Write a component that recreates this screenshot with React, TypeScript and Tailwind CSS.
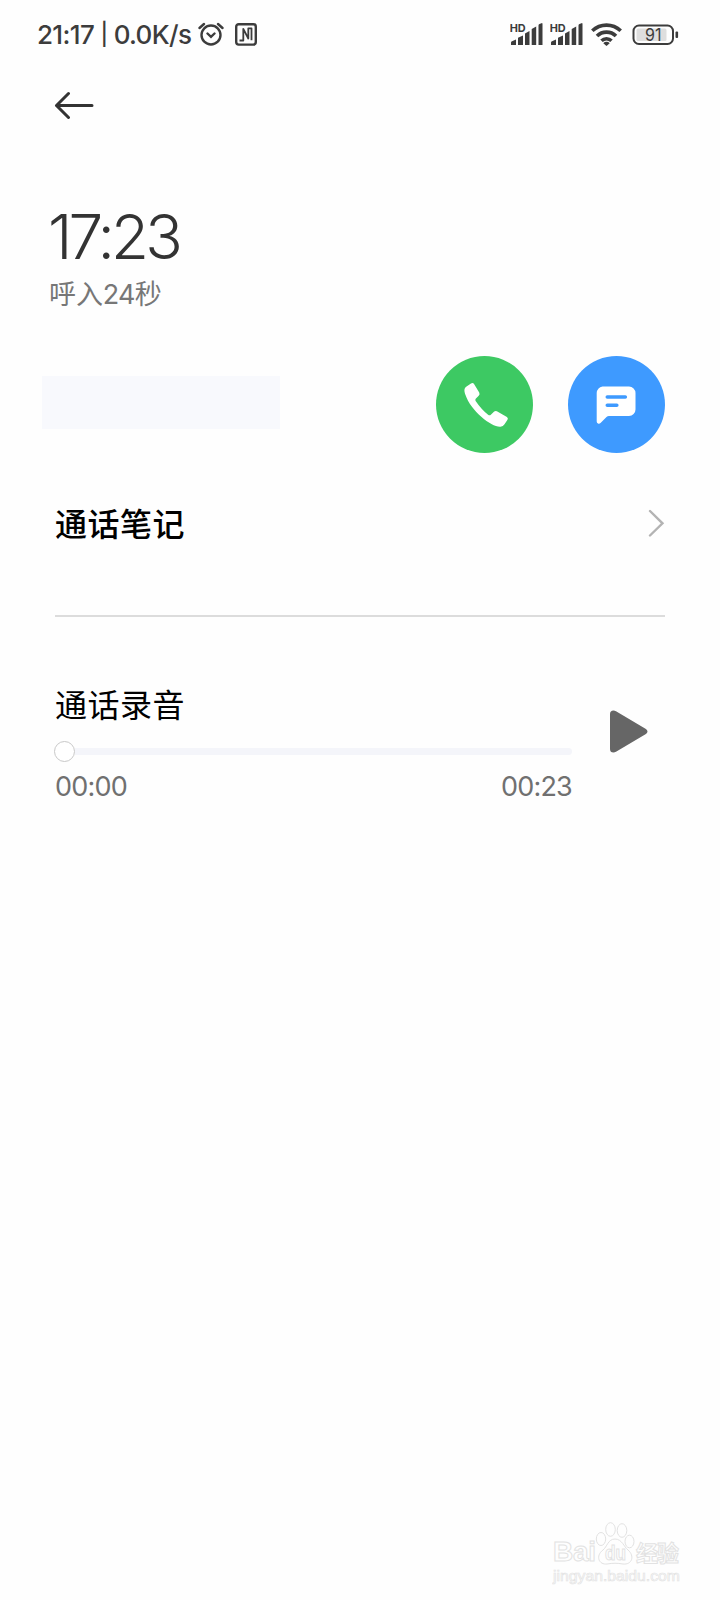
import type { ReactNode } from "react"

const SANS = "font-['Inter','Noto_Sans_CJK_SC',sans-serif]"

function SignalIcon() {
  return (
    <svg width="40" height="24" viewBox="0 0 40 24" fill="#3c3c3c">
      <path d="M1 23v-2.500q0-1 1-1.300l4-1.700V23zM8 23v-7.200l5-2.300V23zM15 23V11.500l4.500-2.500v14zM21.700 23V7l4.500-2.500V23zM28.500 23V3.500q0-1 1-1.400l2-.9q1-.4 1 .8v21z" />
      <text
        x="-0.300"
        y="9.500"
        fontSize="11"
        fontWeight="700"
        textLength="16"
        lengthAdjust="spacingAndGlyphs"
      >
        HD
      </text>
    </svg>
  )
}

function StatusBar() {
  return (
    <header className="flex h-[70px] items-start justify-between pt-[22px] pr-[41px] pl-[37px] text-[#3c3c3c]">
      <div className="flex h-6 items-center">
        <span className="w-[161px] pt-[2px] text-[26px] leading-6 font-medium tracking-[-0.65px] whitespace-nowrap">
          21:17 <span className="relative -top-[2px] text-[22px]">|</span> 0.0K/s
        </span>
        <svg width="26" height="24" viewBox="0 0 26 24" fill="none" stroke="#3c3c3c" strokeWidth="2.400" strokeLinecap="round">
          <circle cx="13" cy="13" r="9.500" />
          <path d="M1.500 6 6 2M24.500 6 20 2M9.500 11.500l3.500 3.300 3.500-3.300" />
        </svg>
        <svg className="ml-[11px]" width="22" height="24" viewBox="0 0 22 24" fill="none" stroke="#3c3c3c" strokeWidth="2.400" strokeLinejoin="round">
          <rect x="1.200" y="2.200" width="19.600" height="20.400" rx="2.500" />
          <path d="M4.500 18.500h3.800V6.800l5 9.700V6.300h3.200v12" strokeWidth="1.800" />
        </svg>
      </div>
      <div className="flex h-6">
        <SignalIcon />
        <SignalIcon />
        <svg className="ml-[1px]" width="31" height="24" viewBox="0 0 31 24" fill="none" stroke="#3c3c3c" strokeWidth="3.600">
          <path d="M1.300 8.800a20.500 20.500 0 0 1 28.400 0" />
          <path d="M6 14a13.500 13.500 0 0 1 19 0" />
          <path d="M10.500 18.700a7.200 7.200 0 0 1 10 0" />
          <path d="M12.300 21.300a4.300 4.300 0 0 1 6.400 0L15.500 24z" fill="#3c3c3c" stroke="none" />
        </svg>
        <svg className="ml-[10px]" width="47" height="24" viewBox="0 0 47 24">
          <rect x="1.500" y="3.500" width="39.500" height="18.500" rx="5.500" fill="none" stroke="#3c3c3c" strokeWidth="2" />
          <rect x="4.500" y="6.500" width="30" height="12.500" rx="1.500" fill="#dedede" />
          <rect x="43.500" y="9.500" width="2.600" height="6.500" rx="1" fill="#3c3c3c" />
          <text x="13" y="19" fontSize="17" fill="#3c3c3c" textLength="16.500" lengthAdjust="spacingAndGlyphs">
            91
          </text>
        </svg>
      </div>
    </header>
  )
}

function RoundButton({ className, label, children }: { className: string; label: string; children: ReactNode }) {
  return (
    <button aria-label={label} className={`flex size-[97px] items-center justify-center rounded-full ${className}`}>
      {children}
    </button>
  )
}

function Watermark() {
  return (
    <svg
      width="132"
      height="64"
      viewBox="0 0 132 64"
      fill="#fefefe"
      stroke="#e2e2e2"
      strokeWidth="1"
      className="font-['Liberation_Sans','Noto_Sans_CJK_SC',sans-serif]"
    >
      <text x="1" y="39" fontSize="28" fontWeight="700" textLength="43">
        Bai
      </text>
      <ellipse cx="49" cy="17" rx="4.700" ry="6.500" />
      <ellipse cx="58.500" cy="7.500" rx="4.800" ry="6.800" />
      <ellipse cx="70" cy="8.500" rx="4.800" ry="6.800" />
      <ellipse cx="77.500" cy="19.500" rx="4.500" ry="6.300" />
      <path d="M63 17c-7 0-8 8-12 11-8 6-4 15 4 14 6-1 10-1 16 0 9 1 12-8 5-14-4-3-6-11-13-11z" />
      <text x="53" y="38" fontSize="20" fontWeight="700" textLength="21" lengthAdjust="spacingAndGlyphs">
        du
      </text>
      <text x="84" y="38.500" fontSize="22" fontWeight="700" textLength="43">
        经验
      </text>
      <text x="1" y="58.500" fontSize="14" strokeWidth=".6" textLength="127" lengthAdjust="spacingAndGlyphs">
        jingyan.baidu.com
      </text>
    </svg>
  )
}

export default function App() {
  return (
    <div className={`flex h-[1600px] w-[720px] flex-col overflow-hidden bg-[#fefefe] ${SANS}`}>
      <StatusBar />

      <nav className="h-[130px] pt-[21px] pl-[54px]">
        <svg width="41" height="28" viewBox="0 0 41 28" fill="none" stroke="#333" strokeWidth="3" strokeLinecap="round" strokeLinejoin="round">
          <path d="M38 14.500H2.500M14.500 2.500l-12 12 12 12" />
        </svg>
      </nav>

      <section className="h-[156px] pl-[49px]">
        <h1 className="-ml-[1px] h-[75px] text-[62px] leading-[73px] font-light tracking-[-3.8px] text-[#333]">17:23</h1>
        <p className="text-[27px] leading-10 tracking-[-0.1px] text-[#777]">
          呼入<span className="tracking-[-0.8px]">24</span>秒
        </p>
      </section>

      <section className="flex h-[97px] items-center pr-[55px] pl-[42px]">
        <div className="-mt-[5px] h-[53px] w-[238px] bg-[#f8f9fd]" />
        <div className="ml-auto flex gap-[35px]">
          <RoundButton label="拨打电话" className="bg-[#3dc963]">
            <svg className="ml-[3px]" width="46" height="46" viewBox="0 0 46 46" fill="#fff">
              <path d="M3.500 4.500 8 1.500q2-1.200 3.200.8l5 8.200q1 1.800-.5 3.200l-3 3q-.9 1 .1 2.500 6 8.700 12.300 13.500 1.500 1.200 2.700.1l3.400-3.200q1.200-1.200 2.700-.3l10 5.800q1.600 1 .6 2.700l-3 4.500q-1.400 2.200-4 2.400C29 45.500 8 29.500 2.300 12.500 1.200 9 .8 6.300 3.500 4.500z" />
            </svg>
          </RoundButton>
          <RoundButton label="发送短信" className="bg-[#3e9aff]">
            <svg className="-ml-[1px]" width="40" height="38" viewBox="0 0 40 38" fill="#fff">
              <path d="M6.500.5H33a6.500 6.500 0 0 1 6.500 6.500v16.500A6.500 6.500 0 0 1 33 30H13q-1.500 0-2.500 1l-6 6q-1.200 1-2.500.4Q.7 37 .7 35.500V7A6.500 6.500 0 0 1 6.500.5z" />
              <path d="M11.300 11h18M11.300 19.300h9.500" stroke="#3e9aff" strokeWidth="3.600" strokeLinecap="round" />
            </svg>
          </RoundButton>
        </div>
      </section>

      <section className="mx-[55px] flex h-[164px] items-start justify-between border-b-2 border-[#dcdcdc] pt-[50px]">
        <h2 className="pt-[2px] text-[32px] leading-[40px] font-medium tracking-[0.5px] text-black">通话笔记</h2>
        <svg className="mt-[6px]" width="17" height="28" viewBox="0 0 17 28" fill="none" stroke="#b3b3b3" strokeWidth="2.400" strokeLinecap="round">
          <path d="M2 2l12.500 12.300L2 26.500" />
        </svg>
      </section>

      <section className="flex px-[55px] pt-[67px]">
        <div className="w-[517px]">
          <h2 className="h-[57px] pt-[2px] text-[32px] leading-[40px] tracking-[0.5px] text-black">通话录音</h2>
          <div className="flex h-[21px] items-center">
            <span className="-ml-[1px] size-[21px] rounded-full border border-[#c8c8c8] bg-white" />
            <span className="h-[7px] flex-1 rounded-r-full bg-[#f4f5fa]" />
          </div>
          <div className="flex justify-between pt-[8px] text-[27px] leading-[34px] tracking-[-0.8px] text-[#707070]">
            <span>00:00</span>
            <span>00:23</span>
          </div>
        </div>
        <svg className="mt-[26px] ml-[38px]" width="38" height="43" viewBox="0 0 38 43" fill="#666">
          <path d="M0 4Q0 .5 3.500.5q1.200 0 2.500.8l29.500 17.500q2 1.200 2 2.700t-2 2.700L6 41.700q-1.300.8-2.500.8Q0 42.500 0 39z" />
        </svg>
      </section>

      <footer className="mt-auto flex h-[80px] justify-end pt-[2px] pr-[36px]">
        <Watermark />
      </footer>
    </div>
  )
}
